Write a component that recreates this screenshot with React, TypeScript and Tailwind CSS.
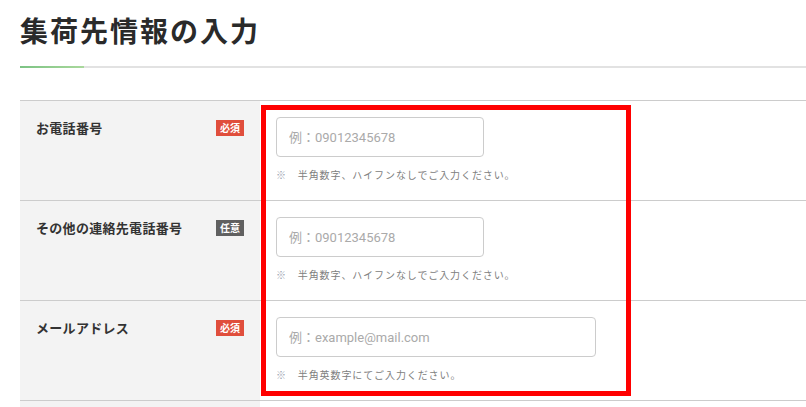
import React from "react";

type Field = {
  label: string;
  required: boolean;
  placeholder: string;
  note: string;
  wide?: boolean;
};

const fields: Field[] = [
  {
    label: "お電話番号",
    required: true,
    placeholder: "例：09012345678",
    note: "半角数字、ハイフンなしでご入力ください。",
  },
  {
    label: "その他の連絡先電話番号",
    required: false,
    placeholder: "例：09012345678",
    note: "半角数字、ハイフンなしでご入力ください。",
  },
  {
    label: "メールアドレス",
    required: true,
    placeholder: "例：example@mail.com",
    note: "半角英数字にてご入力ください。",
    wide: true,
  },
];

function Badge({ required }: { required: boolean }) {
  return required ? (
    <span className="mt-[2px] flex h-4 w-7 items-center justify-center bg-[#e04e3c] text-[10px] font-bold leading-none text-white">
      必須
    </span>
  ) : (
    <span className="mt-[2px] flex h-4 w-7 items-center justify-center bg-[#606060] text-[10px] font-bold leading-none text-white">
      任意
    </span>
  );
}

function Row({ field }: { field: Field }) {
  return (
    <div className="flex h-[100px] border-b border-[#cccccc]">
      <div className="flex w-[240px] shrink-0 items-start justify-between bg-[#f3f3f3] px-4 pt-[17px]">
        <span className="text-[13px] font-bold leading-5 tracking-[0.3px] text-[#333333]">{field.label}</span>
        <Badge required={field.required} />
      </div>
      <div className="flex-1 bg-white pl-4 pt-4">
        <input
          type="text"
          placeholder={field.placeholder}
          className={`h-10 ${field.wide ? "w-[320px]" : "w-[208px]"} rounded-[4px] border border-[#cccccc] px-3 text-[13px] text-[#333333] outline-none placeholder:text-[#aaaaaa]`}
          style={{ fontFamily: 'Roboto, "Noto Sans CJK JP", sans-serif' }}
        />
        <p className="mt-[10px] text-[10px] leading-4 tracking-[0.9px] text-[#808080]">
          <span className="text-[#9aa4b0]">※</span>　{field.note}
        </p>
      </div>
    </div>
  );
}

export default function App() {
  return (
    <div
      className="relative h-[407px] w-[806px] overflow-hidden bg-white pl-5"
      style={{ fontFamily: '"Noto Sans CJK JP", "Noto Sans", sans-serif' }}
    >
      <h1 className="pt-[10px] text-[28px] font-bold leading-10 tracking-[2px] text-[#2a2a2a]">
        集荷先情報の入力
      </h1>
      <div className="mt-4 flex h-[2px] bg-[#e2e2e2]">
        <div className="h-full w-16 bg-gradient-to-r from-[#7cc384] to-[#a9d89c]" />
      </div>

      <div className="mt-8 border-t border-[#cccccc]">
        {fields.map((f) => (
          <Row key={f.label} field={f} />
        ))}
        <div className="flex h-[40px]">
          <div className="w-[240px] bg-[#f3f3f3]" />
          <div className="flex-1 bg-white" />
        </div>
      </div>

      {/* annotation frame */}
      <div className="pointer-events-none absolute left-[261px] top-[105px] h-[291px] w-[370px] border-[5px] border-[#ff0000]" />
    </div>
  );
}
